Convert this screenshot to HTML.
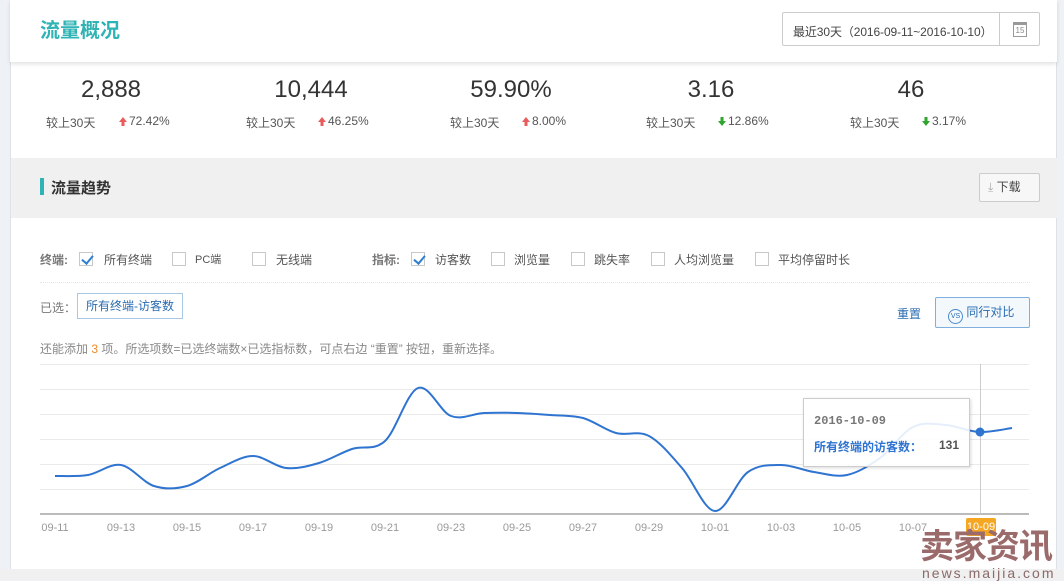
<!DOCTYPE html>
<html><head><meta charset="utf-8">
<style>
*{margin:0;padding:0;box-sizing:border-box}
body{width:1064px;height:580px;overflow:hidden;background:#eef1f5;font-family:"Liberation Sans","Noto Sans CJK SC",sans-serif;font-size:12px;color:#555;position:relative}
.a{position:absolute}
.main{position:absolute;left:10px;top:0;width:1047px;height:580px;background:#fff;border-left:1px solid #dde2e8;border-right:1px solid #dde2e8}
.num{font-size:24px;color:#333;text-align:center;width:160px}
.cmp{font-size:12px;color:#555;white-space:nowrap}
.cb{position:absolute;top:252px;width:14px;height:14px;border:1px solid #c8c8c8;background:#fff}
.ck::after{content:"";position:absolute;left:4px;top:0px;width:5px;height:9px;border:solid #2f7fd0;border-width:0 2px 2px 0;transform:rotate(40deg)}
.t{position:absolute;top:251px;color:#555;white-space:nowrap}
.xl{font-family:"Liberation Sans",sans-serif;font-size:11px;color:#999;top:522px;width:40px;text-align:center}
</style></head><body>
<div class="main"></div>
<div class="a" style="left:10px;top:0;width:1047px;height:62px;background:#fff;box-shadow:0 2px 4px rgba(0,0,0,.12);z-index:2"></div>
<div class="a" style="left:40px;top:14px;font-size:20px;font-weight:bold;color:#2fb3b5;z-index:3">流量概况</div>
<div class="a" style="left:782px;top:12px;width:258px;height:34px;border:1px solid #ccc;border-radius:2px;background:#fff;z-index:3">
 <div class="a" style="left:10px;top:10px;font-size:12px;letter-spacing:-0.1px;color:#444;white-space:nowrap">最近30天（2016-09-11~2016-10-10）</div>
 <div class="a" style="left:216px;top:0;width:1px;height:32px;background:#ccc"></div>
 <div class="a" style="left:230px;top:9px;width:14px;height:15px;border:1px solid #999;border-top-width:3px;font-size:8px;color:#888;text-align:center;line-height:11px">15</div>
</div>
<div class="a num" style="left:31px;top:76px">2,888</div>
<div class="a num" style="left:231px;top:76px">10,444</div>
<div class="a num" style="left:431px;top:76px">59.90%</div>
<div class="a num" style="left:631px;top:76px">3.16</div>
<div class="a num" style="left:831px;top:76px">46</div>
<svg width="0" height="0" style="position:absolute"><defs>
<g id="up"><path d="M4 0 L8 5 L5.5 5 L5.5 9 L2.5 9 L2.5 5 L0 5Z" fill="#e85c5c"/></g>
<g id="dn"><path d="M4 9 L8 4 L5.5 4 L5.5 0 L2.5 0 L2.5 4 L0 4Z" fill="#2ea52e"/></g></defs></svg>
<div class="a cmp" style="left:46px;top:114px">较上30天</div><svg class="a" style="left:119px;top:117px" width="8" height="9"><use href="#up"/></svg><div class="a cmp" style="left:129px;top:114px">72.42%</div>
<div class="a cmp" style="left:246px;top:114px">较上30天</div><svg class="a" style="left:318px;top:117px" width="8" height="9"><use href="#up"/></svg><div class="a cmp" style="left:328px;top:114px">46.25%</div>
<div class="a cmp" style="left:450px;top:114px">较上30天</div><svg class="a" style="left:522px;top:117px" width="8" height="9"><use href="#up"/></svg><div class="a cmp" style="left:532px;top:114px">8.00%</div>
<div class="a cmp" style="left:646px;top:114px">较上30天</div><svg class="a" style="left:718px;top:117px" width="8" height="9"><use href="#dn"/></svg><div class="a cmp" style="left:728px;top:114px">12.86%</div>
<div class="a cmp" style="left:850px;top:114px">较上30天</div><svg class="a" style="left:922px;top:117px" width="8" height="9"><use href="#dn"/></svg><div class="a cmp" style="left:932px;top:114px">3.17%</div>
<div class="a" style="left:11px;top:158px;width:1046px;height:60px;background:#f0f0f0"></div>
<div class="a" style="left:40px;top:178px;width:4px;height:17px;background:#2fb3b5"></div>
<div class="a" style="left:51px;top:177px;font-size:15px;font-weight:bold;color:#333">流量趋势</div>
<div class="a" style="left:979px;top:173px;width:61px;height:29px;border:1px solid #ccc;border-radius:2px;background:#f7f7f7;font-size:12px;color:#444;line-height:27px;padding-left:8px"><span style="color:#aaa">⤓</span> 下载</div>
<div class="t" style="left:40px;color:#777;font-weight:bold">终端:</div>
<div class="cb ck" style="left:79px"></div><div class="t" style="left:104px">所有终端</div>
<div class="cb" style="left:172px"></div><div class="t" style="left:195px;font-size:11px">PC端</div>
<div class="cb" style="left:252px"></div><div class="t" style="left:276px">无线端</div>
<div class="t" style="left:372px;color:#777;font-weight:bold">指标:</div>
<div class="cb ck" style="left:411px"></div><div class="t" style="left:435px">访客数</div>
<div class="cb" style="left:491px"></div><div class="t" style="left:514px">浏览量</div>
<div class="cb" style="left:571px"></div><div class="t" style="left:594px">跳失率</div>
<div class="cb" style="left:651px"></div><div class="t" style="left:674px">人均浏览量</div>
<div class="cb" style="left:755px"></div><div class="t" style="left:778px">平均停留时长</div>
<div class="a" style="left:40px;top:282px;width:990px;border-top:1px dotted #e6e6e6"></div>
<div class="a" style="left:40px;top:299px;color:#777">已选：</div>
<div class="a" style="left:77px;top:293px;width:106px;height:26px;border:1px solid #a9c8e8;color:#2a6cb0;line-height:24px;text-align:center">所有终端-访客数</div>
<div class="a" style="left:897px;top:305px;color:#2a6cb0">重置</div>
<div class="a" style="left:935px;top:297px;width:95px;height:31px;border:1px solid #7fb0dd;border-radius:2px;background:#f3f8fd;color:#2a6cb0;line-height:29px;padding-left:12px"><span style="display:inline-block;width:15px;height:15px;border:1px solid #4a8ad0;border-radius:50%;font-size:7px;line-height:13px;text-align:center;vertical-align:-2px">VS</span> 同行对比</div>
<div class="a" style="left:40px;top:340px;color:#888">还能添加 <span style="color:#f08a24">3</span> 项。所选项数=已选终端数×已选指标数，可点右边 “重置” 按钮，重新选择。</div>
<svg class="a" style="left:0;top:0" width="1064" height="580">
<g stroke="#eaeaea" stroke-width="1">
<line x1="40" y1="364.5" x2="1029" y2="364.5"/><line x1="40" y1="389.5" x2="1029" y2="389.5"/><line x1="40" y1="414.5" x2="1029" y2="414.5"/><line x1="40" y1="439.5" x2="1029" y2="439.5"/><line x1="40" y1="464.5" x2="1029" y2="464.5"/><line x1="40" y1="489.5" x2="1029" y2="489.5"/>
</g>
<line x1="40" y1="514" x2="1029" y2="514" stroke="#bbb" stroke-width="2"/>
<line x1="980.5" y1="364" x2="980.5" y2="514" stroke="#ccc"/>
<path id="ln" fill="none" stroke="#2f74d0" stroke-width="2"/>
<circle cx="980" cy="432" r="4.5" fill="#2f74d0"/>
</svg>
<div class="a xl" style="left:35px">09-11</div><div class="a xl" style="left:101px">09-13</div><div class="a xl" style="left:167px">09-15</div><div class="a xl" style="left:233px">09-17</div><div class="a xl" style="left:299px">09-19</div><div class="a xl" style="left:365px">09-21</div><div class="a xl" style="left:431px">09-23</div><div class="a xl" style="left:497px">09-25</div><div class="a xl" style="left:563px">09-27</div><div class="a xl" style="left:629px">09-29</div><div class="a xl" style="left:695px">10-01</div><div class="a xl" style="left:761px">10-03</div><div class="a xl" style="left:827px">10-05</div><div class="a xl" style="left:893px">10-07</div>
<div class="a" style="left:966px;top:518px;width:30px;height:18px;background:#f5a623;color:#fff;border-radius:2px;line-height:18px;font-size:11px;text-align:center;white-space:nowrap;overflow:hidden">10-09</div>
<div class="a" style="left:803px;top:398px;width:167px;height:69px;background:rgba(255,255,255,.88);border:1px solid #ccc;box-shadow:1px 1px 3px rgba(0,0,0,.15)">
 <div class="a" style="left:10px;top:15px;font-size:12px;font-weight:bold;color:#777;font-family:'Liberation Mono',monospace">2016-10-09</div>
 <div class="a" style="left:10px;top:39px;font-size:12px;font-weight:bold;color:#2f74d0;white-space:nowrap">所有终端的访客数：</div>
 <div class="a" style="left:135px;top:39px;font-size:12px;font-weight:bold;color:#555">131</div>
</div>
<div class="a" style="left:0;top:569px;width:1064px;height:11px;background:#f0f0f0"></div>
<div class="a" style="left:920px;top:527px;font-size:34px;font-weight:bold;color:#9b6a6a;letter-spacing:-1px;white-space:nowrap;line-height:40px">卖家资讯</div>
<div class="a" style="left:922px;top:566px;font-size:14px;color:#8a6a6a;letter-spacing:2px;line-height:14px;white-space:nowrap">news.maijia.com</div>
<script>
var y=[476,475,465,486,486,468,456,468,463,449,441,388,416,413,413,415,418,433,436,468,511,472,465,472,475,458,427,425,432,428];
var p=y.map(function(v,i){return [55+33*i,v]});
var d="M"+p[0][0]+","+p[0][1];
for(var i=0;i<p.length-1;i++){var p0=p[i-1]||p[i],p1=p[i],p2=p[i+1],p3=p[i+2]||p2;
var c1x=p1[0]+(p2[0]-p0[0])/6,c1y=p1[1]+(p2[1]-p0[1])/6,c2x=p2[0]-(p3[0]-p1[0])/6,c2y=p2[1]-(p3[1]-p1[1])/6;
d+=" C"+c1x+","+c1y+" "+c2x+","+c2y+" "+p2[0]+","+p2[1];}
document.getElementById("ln").setAttribute("d",d);
</script>
</body></html>
